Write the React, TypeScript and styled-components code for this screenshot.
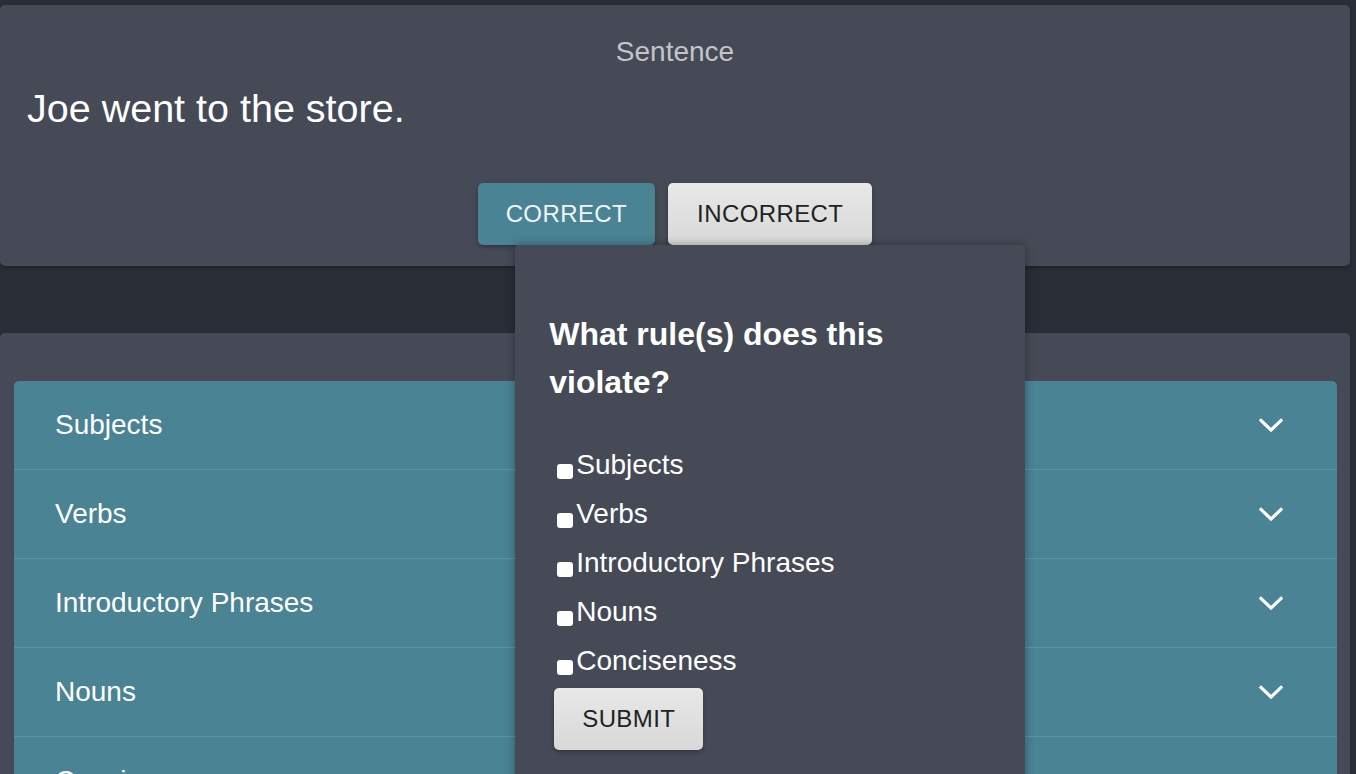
import React from "react";
import styled, { createGlobalStyle } from "styled-components";

const GlobalStyle = createGlobalStyle`
  html, body {
    margin: 0;
    padding: 0;
    background: #292d36;
    overflow: hidden;
    font-family: "Liberation Sans", Arial, Helvetica, sans-serif;
  }
`;

const Page = styled.div`
  display: flex;
  flex-direction: column;
  gap: 67px;
  padding: 5px 6px 0 0;
  height: 769px;
`;

const TopCard = styled.section`
  flex-shrink: 0;
  background: #454a56;
  border-radius: 5px;
  height: 261px;
  box-sizing: border-box;
  padding: 31px 27px 0;
  box-shadow: 0 2px 3px rgba(0, 0, 0, 0.25);
`;

const Label = styled.div`
  text-align: center;
  font-size: 28px;
  line-height: 32px;
  color: #c3c5c9;
`;

const SentenceText = styled.div`
  margin-top: 17px;
  font-size: 39.5px;
  line-height: 46px;
  color: #ffffff;
`;

const ButtonRow = styled.div`
  margin-top: 52px;
  display: flex;
  justify-content: center;
  gap: 13px;
`;

const Button = styled.button<{ $primary?: boolean; $pad?: number }>`
  height: 62px;
  padding: 0 ${(p) => p.$pad ?? 28}px;
  border: none;
  border-radius: 5px;
  font-family: "Liberation Sans", Arial, sans-serif;
  font-size: 24px;
  letter-spacing: 0.4px;
  cursor: pointer;
  color: ${(p) => (p.$primary ? "#f2f4f5" : "#222222")};
  background: ${(p) =>
    p.$primary ? "#4a8394" : "linear-gradient(#e8e8e8, #d8d8d8)"};
  box-shadow: 0 2px 4px rgba(0, 0, 0, 0.3);
`;

const Anchor = styled.div`
  position: relative;
`;

const Popover = styled.div`
  position: absolute;
  top: 100%;
  left: 50%;
  transform: translateX(-50%);
  width: 510px;
  height: 560px;
  box-sizing: border-box;
  padding: 65px 34px 0;
  background: #454a56;
  border-radius: 4px;
  box-shadow: 0 0 10px rgba(0, 0, 0, 0.35);
  z-index: 10;
  text-align: left;
`;

const Heading = styled.h3`
  margin: 0;
  font-size: 32px;
  line-height: 48px;
  font-weight: bold;
  color: #ffffff;
`;

const CheckList = styled.div`
  margin-top: 34px;
  padding-left: 8px;
`;

const CheckRow = styled.label`
  display: block;
  font-size: 28px;
  line-height: 49px;
  color: #ffffff;
  white-space: nowrap;
`;

const Box = styled.input`
  appearance: none;
  -webkit-appearance: none;
  width: 16px;
  height: 15px;
  margin: 0 3px 0 0;
  vertical-align: -5px;
  background: #ffffff;
  border-radius: 3px;
`;

const SubmitButton = styled(Button)`
  margin: 3px 0 0 5px;
`;

const BottomCard = styled.section`
  flex: 1;
  background: #454a56;
  border-radius: 5px;
  padding: 48px 13px 0 14px;
`;

const Accordion = styled.div`
  background: #4a8394;
  border-radius: 5px;
  overflow: hidden;
`;

const Row = styled.div`
  height: 88px;
  border-bottom: 1px solid #5b95a5;
  display: flex;
  align-items: center;
  justify-content: space-between;
  padding: 0 54px 0 41px;
  font-size: 28px;
  color: #ffffff;
`;

const Chevron = () => (
  <svg width="24" height="15" viewBox="0 0 24 15" fill="none">
    <polyline
      points="2,2.5 12,12 22,2.5"
      stroke="#ffffff"
      strokeWidth="3.2"
      strokeLinecap="square"
      fill="none"
    />
  </svg>
);

const rules = [
  "Subjects",
  "Verbs",
  "Introductory Phrases",
  "Nouns",
  "Conciseness",
];

export default function App() {
  return (
    <>
      <GlobalStyle />
      <Page>
        <TopCard>
          <Label>Sentence</Label>
          <SentenceText>Joe went to the store.</SentenceText>
          <ButtonRow>
            <Button $primary>CORRECT</Button>
            <Anchor>
              <Button $pad={29}>INCORRECT</Button>
              <Popover>
                <Heading>What rule(s) does this violate?</Heading>
                <CheckList>
                  {rules.map((r) => (
                    <CheckRow key={r}>
                      <Box type="checkbox" />
                      {r}
                    </CheckRow>
                  ))}
                </CheckList>
                <SubmitButton>SUBMIT</SubmitButton>
              </Popover>
            </Anchor>
          </ButtonRow>
        </TopCard>
        <BottomCard>
          <Accordion>
            {rules.map((r) => (
              <Row key={r}>
                <span>{r}</span>
                <Chevron />
              </Row>
            ))}
          </Accordion>
        </BottomCard>
      </Page>
    </>
  );
}
